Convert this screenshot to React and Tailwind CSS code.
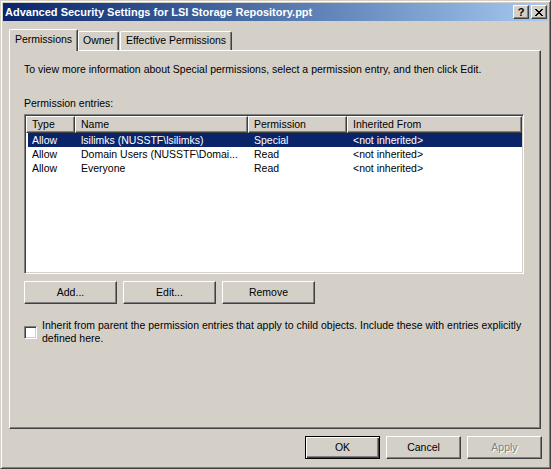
import React from 'react';

const raised = 'border border-t-white border-l-white border-r-[#404040] border-b-[#404040] shadow-[inset_-1px_-1px_0_#808080] bg-[#d4d0c8]';
const sunken = 'border border-t-[#808080] border-l-[#808080] border-r-white border-b-white shadow-[inset_1px_1px_0_#404040,inset_-1px_-1px_0_#d4d0c8]';

const columns = [
  { label: 'Type', w: 'w-[49px]' },
  { label: 'Name', w: 'w-[173px]' },
  { label: 'Permission', w: 'w-[99px]' },
  { label: 'Inherited From', w: 'w-[175px]' },
];

const entries = [
  { type: 'Allow', name: 'lsilimks (NUSSTF\\lsilimks)', perm: 'Special', from: '<not inherited>', selected: true },
  { type: 'Allow', name: 'Domain Users (NUSSTF\\Domai...', perm: 'Read', from: '<not inherited>' },
  { type: 'Allow', name: 'Everyone', perm: 'Read', from: '<not inherited>' },
];

const CloseGlyph = () => (
  <svg width="8" height="7" viewBox="0 0 8 7" shapeRendering="crispEdges">
    <g fill="#000">
      <rect x="0" y="0" width="2" height="1" />
      <rect x="6" y="0" width="2" height="1" />
      <rect x="1" y="1" width="2" height="1" />
      <rect x="5" y="1" width="2" height="1" />
      <rect x="2" y="2" width="4" height="1" />
      <rect x="3" y="3" width="2" height="1" />
      <rect x="2" y="4" width="4" height="1" />
      <rect x="1" y="5" width="2" height="1" />
      <rect x="5" y="5" width="2" height="1" />
      <rect x="0" y="6" width="2" height="1" />
      <rect x="6" y="6" width="2" height="1" />
    </g>
  </svg>
);

const Button = ({ children, className = '' }) => (
  <div className={`${raised} h-[23px] flex items-center justify-center ${className}`}>{children}</div>
);

export default function App() {
  return (
    <div className="w-[551px] h-[469px] bg-[#d4d0c8] border border-t-[#d4d0c8] border-l-[#d4d0c8] border-r-[#404040] border-b-[#404040] shadow-[inset_1px_1px_0_#fff,inset_-1px_-1px_0_#808080] p-[2px] font-['Liberation_Sans',Arial,sans-serif] text-[10.5px] text-black leading-[13px] select-none">
      <div className="flex flex-col h-full">
        {/* title bar */}
        <div className="h-[18px] flex items-center bg-linear-to-r from-[#0a246a] to-[#a6caf0] pl-[2px] pr-[1px]">
          <span className="text-white font-bold text-[11px] flex-1 whitespace-nowrap">
            Advanced Security Settings for LSI Storage Repository.ppt
          </span>
          <div className="flex gap-[2px]">
            <div className={`${raised} w-[16px] h-[14px] flex items-center justify-center`}>
              <span className="font-bold text-[11px] leading-none">?</span>
            </div>
            <div className={`${raised} w-[16px] h-[14px] flex items-center justify-center`}>
              <CloseGlyph />
            </div>
          </div>
        </div>

        {/* tabs */}
        <div className="mt-[8px] ml-[6px] flex items-end h-[21px]">
          <div className="relative -mb-[1px] h-[22px] w-[69px] flex items-center justify-center pb-[3px] bg-[#d4d0c8] border-t border-l border-r border-t-white border-l-white border-r-[#404040] shadow-[inset_-1px_0_0_#808080] rounded-t-[2px]">
            Permissions
          </div>
          <div className="h-[19px] w-[41px] flex items-center justify-center pb-[1px] border-t border-l border-r border-t-white border-l-white border-r-[#404040] shadow-[inset_-1px_0_0_#808080] rounded-t-[2px]">
            Owner
          </div>
          <div className="ml-[1px] h-[19px] w-[112px] flex items-center justify-center pb-[1px] border-t border-l border-r border-t-white border-l-white border-r-[#404040] shadow-[inset_-1px_0_0_#808080] rounded-t-[2px]">
            Effective Permissions
          </div>
        </div>

        {/* panel */}
        <div className={`${raised} ml-[6px] w-[532px] h-[379px] pt-[12px] pl-[14px] flex flex-col`}>
          <p>To view more information about Special permissions, select a permission entry, and then click Edit.</p>
          <p className="mt-[21px]">Permission entries:</p>

          <div className={`${sunken} mt-[4px] w-[500px] h-[160px] bg-white p-[1px] overflow-hidden`}>
            <div className="flex h-[17px]">
              {columns.map((c) => (
                <div key={c.label} className={`${raised} ${c.w} h-full pl-[5px] flex items-center whitespace-nowrap`}>
                  {c.label}
                </div>
              ))}
            </div>
            {entries.map((e) => (
              <div
                key={e.name}
                className={`ml-[2px] flex h-[14px] items-center whitespace-nowrap ${e.selected ? 'bg-[#0a246a] text-white' : ''}`}
              >
                <div className="w-[47px] pl-[4px]">{e.type}</div>
                <div className="w-[173px] pl-[6px]">{e.name}</div>
                <div className="w-[99px] pl-[6px]">{e.perm}</div>
                <div className="w-[175px] pl-[6px]">{e.from}</div>
              </div>
            ))}
          </div>

          <div className="mt-[7px] flex gap-[6px]">
            <Button className="w-[93px]">Add...</Button>
            <Button className="w-[93px]">Edit...</Button>
            <Button className="w-[93px]">Remove</Button>
          </div>

          <div className="mt-[15px] flex items-center gap-[5px]">
            <div className={`${sunken} w-[13px] h-[13px] bg-white shrink-0`} />
            <p className="w-[490px]">
              Inherit from parent the permission entries that apply to child objects. Include these with entries explicitly defined here.
            </p>
          </div>
        </div>

        {/* dialog buttons */}
        <div className="mt-[7px] flex justify-end gap-[6px] pr-[6px]">
          <div className="w-[75px] h-[23px] flex items-center justify-center bg-[#d4d0c8] border border-black shadow-[inset_1px_1px_0_#fff,inset_-1px_-1px_0_#404040,inset_-2px_-2px_0_#808080]">
            OK
          </div>
          <Button className="w-[75px]">Cancel</Button>
          <Button className="w-[75px] text-[#808080] [text-shadow:1px_1px_0_#fff]">Apply</Button>
        </div>
      </div>
    </div>
  );
}
